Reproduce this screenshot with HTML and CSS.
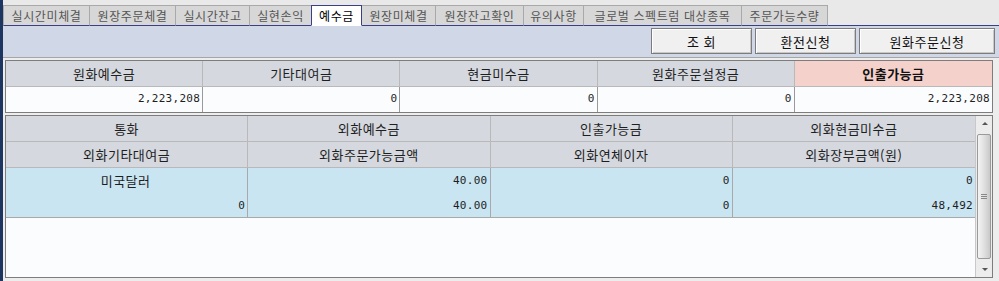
FILE: index.html
```html
<!DOCTYPE html>
<html lang="ko">
<head>
<meta charset="utf-8">
<link rel="stylesheet" href="styles.css">
</head>
<body>
<div class="window">
  <div class="tabs">
    <div class="tab w87">실시간미체결</div>
    <div class="tab w86">원장주문체결</div>
    <div class="tab w74">실시간잔고</div>
    <div class="tab w62">실현손익</div>
    <div class="tab active w50">예수금</div>
    <div class="tab w74">원장미체결</div>
    <div class="tab w88">원장잔고확인</div>
    <div class="tab w60">유의사항</div>
    <div class="tab w158">글로벌 스펙트럼 대상종목</div>
    <div class="tab w86">주문가능수량</div>
  </div>
  <div class="toolbar">
    <button class="btn b100">조 회</button>
    <button class="btn b101">환전신청</button>
    <button class="btn b135">원화주문신청</button>
  </div>
  <div class="content">
    <div class="box summary">
      <div class="hcell">원화예수금</div>
      <div class="hcell">기타대여금</div>
      <div class="hcell">현금미수금</div>
      <div class="hcell">원화주문설정금</div>
      <div class="hcell pink">인출가능금</div>
      <div class="dcell">2,223,208</div>
      <div class="dcell">0</div>
      <div class="dcell">0</div>
      <div class="dcell">0</div>
      <div class="dcell last">2,223,208</div>
    </div>
    <div class="box fx">
      <div class="grid">
        <div class="hcell">통화</div>
        <div class="hcell">외화예수금</div>
        <div class="hcell">인출가능금</div>
        <div class="hcell last">외화현금미수금</div>
        <div class="hcell">외화기타대여금</div>
        <div class="hcell">외화주문가능금액</div>
        <div class="hcell">외화연체이자</div>
        <div class="hcell last">외화장부금액(원)</div>
        <div class="rcell center">미국달러</div>
        <div class="rcell">40.00</div>
        <div class="rcell">0</div>
        <div class="rcell last">0</div>
        <div class="rcell bottom">0</div>
        <div class="rcell bottom">40.00</div>
        <div class="rcell bottom">0</div>
        <div class="rcell bottom last">48,492</div>
      </div>
      <div class="scrollbar">
        <div class="arrow up"></div>
        <div class="thumb"><span class="grip"></span></div>
        <div class="arrow down"></div>
      </div>
    </div>
  </div>
</div>
</body>
</html>
```
FILE: styles.css
```css
* { box-sizing: border-box; }
html, body { margin: 0; padding: 0; }
body {
  width: 999px;
  height: 281px;
  overflow: hidden;
  background: #e9e9e9;
  font-family: "Noto Sans CJK KR", "Noto Sans", sans-serif;
  font-size: 12px;
  color: #1e1e1e;
}
.window {
  height: 281px;
  border-left: 3px solid #1d3561;
  display: flex;
  flex-direction: column;
}
.tabs {
  display: flex;
  padding-top: 5px;
  height: 26px;
  position: relative;
  z-index: 1;
}
.tab {
  height: 21px;
  line-height: 19px;
  text-align: center;
  color: #555;
  background: #d7d7d7;
  border: 1px solid #a9a9a9;
  border-left: none;
  border-bottom: 1px solid #3b3f86;
  white-space: nowrap;
  letter-spacing: 0.6px;
}
.tab:first-child { border-left: 1px solid #a9a9a9; }
.tab.active {
  background: #ffffff;
  color: #000;
  border: 1px solid #3b3f86;
  border-bottom: 1px solid #ffffff;
  margin-left: -1px;
}
.w87 { width: 87px; }
.w86 { width: 86px; }
.w74 { width: 74px; }
.w62 { width: 62px; }
.w50 { width: 51px; }
.w88 { width: 88px; }
.w60 { width: 60px; }
.w158 { width: 158px; }
.toolbar {
  height: 32px;
  margin-top: -1px;
  border-top: 1px solid #3b3f86;
  background: #d0d7e6;
  display: flex;
  justify-content: flex-end;
  align-items: flex-start;
  gap: 3px;
  padding: 2px 4px 0 0;
}
.btn {
  height: 26px;
  font-family: inherit;
  font-size: 13px;
  color: #111;
  background: #f0f0f0;
  border: 1px solid #7c7c7c;
  box-shadow: inset 1px 1px 0 #ffffff, inset -1px -1px 0 #c8c8c8;
  padding: 0;
  letter-spacing: 0.5px;
}
.b100 { width: 101px; }
.b101 { width: 101px; }
.b135 { width: 136px; }
.content {
  flex: 1;
  border-top: 1px solid #a6a6a6;
  background: #ededed;
  padding: 2px 6px 3px 2px;
  display: flex;
  flex-direction: column;
  gap: 2px;
}
.box {
  border: 1px solid #7d7d7d;
  background: #fbfcfe;
}
.summary {
  display: grid;
  grid-template-columns: repeat(5, 1fr);
  grid-template-rows: 26px 25px;
}
.hcell {
  background: #d5d8df;
  text-align: center;
  line-height: 25px;
  font-size: 13px;
  letter-spacing: 0.5px;
  border-right: 1px solid #b9b9b9;
  border-bottom: 1px solid #b9b9b9;
  white-space: nowrap;
}
.summary .hcell { line-height: 26px; }
.summary .hcell.pink {
  background: #f5d1cb;
  font-weight: bold;
  color: #111;
  border-right: none;
}
.dcell {
  background: #fbfcfe;
  text-align: right;
  line-height: 24px;
  padding-right: 2px;
  border-right: 1px solid #9a9a9a;
  font-family: "DejaVu Sans Mono", monospace;
  font-size: 11px;
  letter-spacing: 0.3px;
}
.dcell.last { border-right: none; }
.fx {
  flex: 1;
  display: flex;
}
.grid {
  flex: 1;
  display: grid;
  grid-template-columns: repeat(4, 1fr);
  grid-template-rows: 26px 26px 25px 25px;
  align-content: start;
}
.grid .hcell.last { border-right: none; }
.rcell {
  background: #c9e5f1;
  text-align: right;
  line-height: 25px;
  padding-right: 2px;
  border-right: 1px solid #a9a9a9;
  font-family: "DejaVu Sans Mono", monospace;
  font-size: 11px;
  letter-spacing: 0.3px;
}
.rcell.center {
  text-align: center;
  font-family: "Noto Sans CJK KR", sans-serif;
  font-size: 13px;
  letter-spacing: 0.5px;
}
.rcell.bottom { border-bottom: 1px solid #a9a9a9; }
.rcell.last { border-right: none; }
.scrollbar {
  width: 17px;
  background: #ececec;
  border-left: 1px solid #c8c8c8;
  display: flex;
  flex-direction: column;
  align-items: center;
  padding: 0 1px;
}
.arrow {
  width: 100%;
  height: 17px;
  position: relative;
}
.arrow::after {
  content: "";
  position: absolute;
  left: 5px;
  width: 0;
  height: 0;
  border-left: 3px solid transparent;
  border-right: 3px solid transparent;
}
.arrow.up::after { top: 6px; border-bottom: 3px solid #555; }
.arrow.down::after { top: 8px; border-top: 3px solid #555; }
.thumb {
  flex: 1;
  width: 14px;
  margin: 1px 0;
  border: 1px solid #9a9a9a;
  border-radius: 2px;
  background: linear-gradient(to right, #f4f4f4, #dcdcdc 60%, #c9c9c9);
  display: flex;
  align-items: center;
  justify-content: center;
}
.grip {
  width: 6px;
  height: 5px;
  border-top: 1px solid #888;
  border-bottom: 1px solid #888;
  position: relative;
}
.grip::after {
  content: "";
  position: absolute;
  left: 0;
  right: 0;
  top: 1px;
  border-top: 1px solid #888;
}
```
